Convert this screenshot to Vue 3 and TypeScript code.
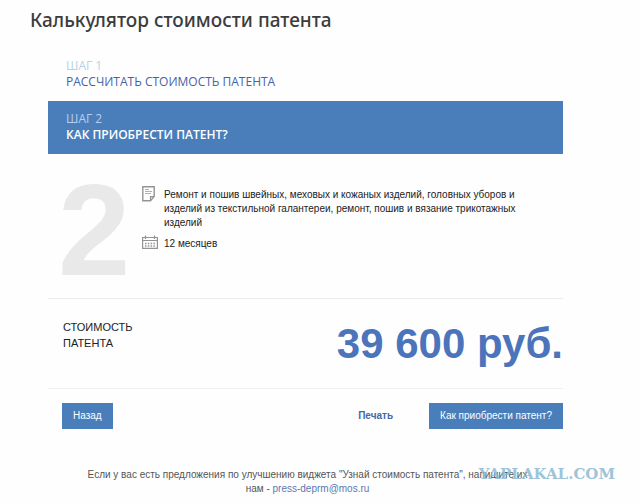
<script setup lang="ts">
interface Step {
  id: number
  title: string
}

const steps: Step[] = [
  { id: 1, title: 'Рассчитать стоимость патента' },
  { id: 2, title: 'Как приобрести патент?' },
]
const activeStep = 2
const activity =
  'Ремонт и пошив швейных, меховых и кожаных изделий, головных уборов и изделий из текстильной галантереи, ремонт, пошив и вязание трикотажных изделий'
const period = '12 месяцев'
const price = '39 600 руб.'
const email = 'press-deprm@mos.ru'

function printPage(): void {
  window.print()
}
</script>

<template>
  <main class="page">
    <h1 class="title">Калькулятор стоимости патента</h1>

    <section class="widget">
      <div
        v-for="step in steps"
        :key="step.id"
        class="step"
        :class="{ active: step.id === activeStep }"
      >
        <span class="step-label">Шаг {{ step.id }}</span>
        <h2 class="step-title">{{ step.title }}</h2>
      </div>

      <div class="details">
        <div class="big-number">{{ activeStep }}</div>
        <div class="facts">
          <div class="fact">
            <svg class="icon" width="16" height="16" viewBox="0 0 16 16" fill="none" stroke="#949494" aria-hidden="true">
              <path d="M0.8 0.8H12.2V10.5L8.5 14.7H0.8Z" stroke-width="1.4" />
              <path d="M8.5 14.5V10.7H12" stroke-width="1.2" />
              <path d="M3 3.5H7M3 5.5H10M3 7.5H9" stroke-width="1" stroke="#b0b0b0" />
            </svg>
            <p class="fact-text">{{ activity }}</p>
          </div>
          <div class="fact">
            <svg class="icon" width="16" height="16" viewBox="0 0 16 16" fill="none" stroke="#949494" aria-hidden="true">
              <path d="M0.6 2.5H15.4V13.4H0.6Z" stroke-width="1.2" />
              <path d="M0.6 5.5H15.4" stroke-width="1" />
              <path d="M3.5 0.5V4M12.5 0.5V4" stroke-width="1.3" />
              <path d="M3 8.5H13.5M3 11H13.5" stroke-width="1.5" stroke-dasharray="1.5 1.3" />
            </svg>
            <p class="fact-text">{{ period }}</p>
          </div>
        </div>
      </div>

      <div class="cost">
        <div class="cost-label">Стоимость патента</div>
        <div class="cost-value">{{ price }}</div>
      </div>

      <div class="actions">
        <button type="button" class="button">Назад</button>
        <button type="button" class="print" @click="printPage">Печать</button>
        <button type="button" class="button">Как приобрести патент?</button>
      </div>

      <p class="feedback">
        Если у вас есть предложения по улучшению виджета "Узнай стоимость патента", напишите их
        нам - <a class="mail" :href="`mailto:${email}`">{{ email }}</a>
      </p>
    </section>

    <div class="watermark">YAPLAKAL.COM</div>
  </main>
</template>

<style>
body {
  margin: 0;
  background: #fefefe;
}
</style>

<style scoped>
.page {
  position: relative;
  padding: 8px 77px 0 48px;
  font-family: "Liberation Sans", Arial, sans-serif;
  font-size: 10px;
  line-height: 14px;
  color: #222;
}

.title {
  margin: 0 0 24px -18px;
  font-family: "Noto Sans", sans-serif;
  font-size: 19px;
  line-height: 24px;
  font-weight: 500;
  color: #3c3c3c;
}

.step {
  padding: 2px 18px 11px;
  font-family: "Open Sans", "Noto Sans", sans-serif;
  font-size: 12px;
  line-height: 16px;
  text-transform: uppercase;
  color: #4662a8;
}

.step-label {
  display: block;
  color: #b5d3e8;
}

.step-title {
  margin: 0;
  font-size: 12px;
  line-height: 16px;
  font-weight: 400;
}

.step.active {
  padding: 10px 18px 11px;
  background: #4a7ebb;
  color: #fff;
}

.active .step-label {
  color: #b3cfee;
}

.active .step-title {
  font-weight: 600;
}

.details {
  display: flex;
  height: 144px;
  border-bottom: 1px solid #ececec;
}

.big-number {
  flex: 0 0 94px;
  padding: 10px 0 0 10px;
  box-sizing: border-box;
  font-size: 130px;
  line-height: 132px;
  font-weight: 700;
  color: #e9e9e9;
}

.facts {
  flex: 1;
  padding: 32px 44px 0 0;
}

.fact {
  display: flex;
  gap: 6px;
  margin-bottom: 5px;
}

.icon {
  flex: none;
}

.fact-text {
  margin: 0;
  padding-top: 2px;
}

.cost {
  display: flex;
  justify-content: space-between;
  padding: 20px 0 19px 15px;
  border-bottom: 1px solid #f1f1f1;
}

.cost-label {
  width: 90px;
  font-size: 11px;
  line-height: 16px;
  text-transform: uppercase;
}

.cost-value {
  font-size: 42px;
  line-height: 50px;
  font-weight: 700;
  white-space: nowrap;
  color: #4c74bb;
}

.actions {
  display: flex;
  align-items: center;
  padding: 14px 0 0 14px;
}

.button,
.print {
  border: 0;
  font-family: inherit;
  font-size: 10px;
  line-height: 14px;
  cursor: pointer;
}

.button {
  padding: 6px 11px;
  background: #4a7ebb;
  color: #fff;
}

.print {
  margin: 0 36px 0 auto;
  padding: 0;
  background: none;
  font-weight: 700;
  color: #4668a4;
}

.feedback {
  margin: 39px 30px 0 34px;
  text-align: center;
  color: #555;
}

.mail {
  color: #5a78b4;
  text-decoration: none;
}

.watermark {
  position: absolute;
  right: 25px;
  bottom: 14px;
  font-family: "DejaVu Serif", serif;
  font-size: 15px;
  line-height: 16px;
  font-weight: 700;
  color: #8dbad3;
  opacity: 0.85;
}
</style>
